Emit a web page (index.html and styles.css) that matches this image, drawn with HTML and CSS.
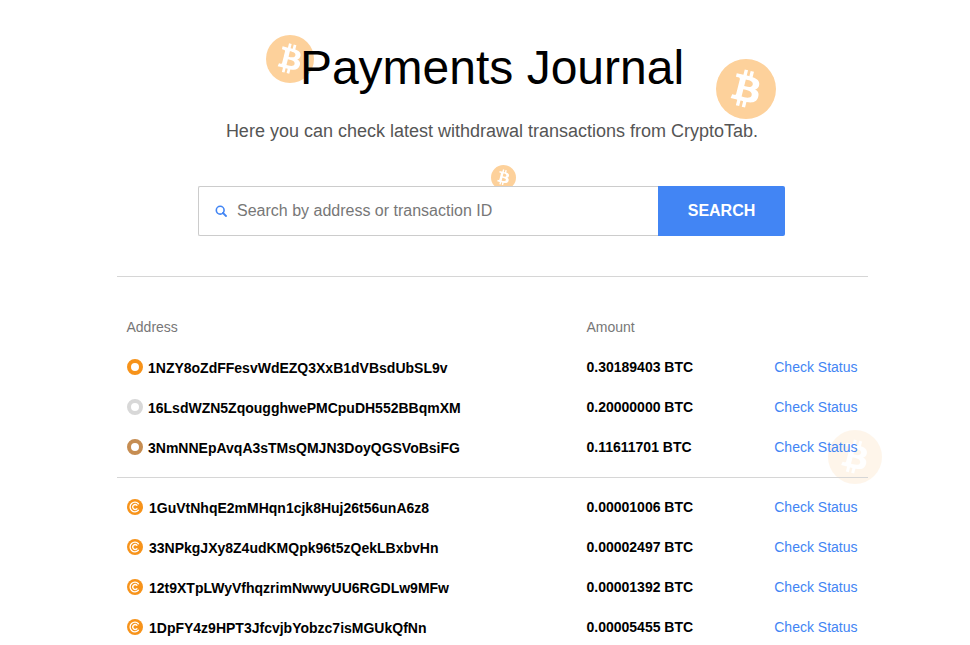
FILE: index.html
```html
<!DOCTYPE html>
<html lang="en">
<head>
<meta charset="utf-8">
<title>Payments Journal</title>
<link rel="stylesheet" href="styles.css">
</head>
<body>
<svg class="defs" width="0" height="0" aria-hidden="true">
  <defs>
    <g id="btc">
      <circle cx="32" cy="32" r="32" fill="#fdd19b"/>
      <path fill="#fff" d="M46.103 27.444c.637-4.258-2.605-6.547-7.038-8.074l1.438-5.768-3.511-.875-1.4 5.616c-.923-.23-1.871-.447-2.813-.662l1.41-5.653-3.509-.875-1.439 5.766c-.764-.174-1.514-.346-2.242-.527l.004-.018-4.842-1.209-.934 3.75s2.605.597 2.55.634c1.422.355 1.679 1.296 1.636 2.042l-1.638 6.571c.098.025.225.061.365.117l-.371-.092-2.296 9.205c-.174.432-.615 1.08-1.609.834.035.051-2.552-.637-2.552-.637l-1.743 4.019 4.569 1.139c.85.213 1.683.436 2.503.646l-1.453 5.834 3.507.875 1.439-5.772c.958.26 1.888.5 2.798.726l-1.434 5.745 3.511.875 1.453-5.823c5.987 1.133 10.489.676 12.384-4.739 1.527-4.36-.076-6.875-3.226-8.515 2.294-.529 4.022-2.038 4.483-5.155zM38.081 38.693c-1.085 4.36-8.426 2.003-10.806 1.412l1.928-7.729c2.38.594 10.012 1.77 8.878 6.317zm1.086-11.312c-.99 3.966-7.1 1.951-9.082 1.457l1.748-7.01c1.982.494 8.365 1.416 7.334 5.553z"/>
    </g>
    <g id="ctab">
      <circle cx="8" cy="8" r="8" fill="#f7931a"/>
      <path fill="none" stroke="#fff" stroke-width="1.3" stroke-linecap="round" d="M11.4 4.7A4.8 4.8 0 1 0 11.4 11.3"/>
      <path fill="none" stroke="#fff" stroke-width="1.3" stroke-linecap="round" d="M9.9 6.3A2.4 2.4 0 1 0 9.9 9.7"/>
    </g>
  </defs>
</svg>

<div class="coin coin-a"><svg viewBox="0 0 64 64"><use href="#btc"/></svg></div>
<div class="coin coin-b"><svg viewBox="0 0 64 64"><use href="#btc"/></svg></div>
<div class="coin coin-c"><svg viewBox="0 0 64 64"><use href="#btc"/></svg></div>
<div class="coin coin-d"><svg viewBox="0 0 64 64"><use href="#btc"/></svg></div>

<main class="page">
  <h1 class="title">Payments Journal</h1>
  <p class="subtitle">Here you can check latest withdrawal transactions from CryptoTab.</p>

  <form class="search">
    <label class="search-field">
      <svg class="search-icon" viewBox="0 0 12 12"><circle cx="5.2" cy="5.2" r="3.9" fill="none" stroke="#4285f4" stroke-width="1.6"/><path d="M8 8l3 3" stroke="#4285f4" stroke-width="1.8" stroke-linecap="round"/></svg>
      <input class="search-input" type="text" placeholder="Search by address or transaction ID">
    </label>
    <button class="search-btn" type="button">SEARCH</button>
  </form>

  <section class="journal">
    <div class="row head"><span class="col-addr">Address</span><span class="col-amt">Amount</span></div>

    <div class="group">
      <div class="row"><span class="col-addr"><span class="ring gold"></span><span class="addr">1NZY8oZdFFesvWdEZQ3XxB1dVBsdUbSL9v</span></span><span class="col-amt">0.30189403 BTC</span><a class="status">Check Status</a></div>
      <div class="row"><span class="col-addr"><span class="ring silver"></span><span class="addr">16LsdWZN5ZqougghwePMCpuDH552BBqmXM</span></span><span class="col-amt">0.20000000 BTC</span><a class="status">Check Status</a></div>
      <div class="row"><span class="col-addr"><span class="ring bronze"></span><span class="addr">3NmNNEpAvqA3sTMsQMJN3DoyQGSVoBsiFG</span></span><span class="col-amt">0.11611701 BTC</span><a class="status">Check Status</a></div>
    </div>

    <div class="group rest">
      <div class="row"><span class="col-addr"><svg class="ctab" viewBox="0 0 16 16"><use href="#ctab"/></svg><span class="addr">1GuVtNhqE2mMHqn1cjk8Huj26t56unA6z8</span></span><span class="col-amt">0.00001006 BTC</span><a class="status">Check Status</a></div>
      <div class="row"><span class="col-addr"><svg class="ctab" viewBox="0 0 16 16"><use href="#ctab"/></svg><span class="addr">33NPkgJXy8Z4udKMQpk96t5zQekLBxbvHn</span></span><span class="col-amt">0.00002497 BTC</span><a class="status">Check Status</a></div>
      <div class="row"><span class="col-addr"><svg class="ctab" viewBox="0 0 16 16"><use href="#ctab"/></svg><span class="addr">12t9XTpLWyVfhqzrimNwwyUU6RGDLw9MFw</span></span><span class="col-amt">0.00001392 BTC</span><a class="status">Check Status</a></div>
      <div class="row"><span class="col-addr"><svg class="ctab" viewBox="0 0 16 16"><use href="#ctab"/></svg><span class="addr">1DpFY4z9HPT3JfcvjbYobzc7isMGUkQfNn</span></span><span class="col-amt">0.00005455 BTC</span><a class="status">Check Status</a></div>
    </div>
  </section>
</main>
</body>
</html>
```
FILE: styles.css
```css
* { box-sizing: border-box; }
html, body { margin: 0; height: 645px; overflow: hidden; background: #fff; }
body { font-family: "Liberation Sans", Arial, sans-serif; color: #000; position: relative; }
.defs { position: absolute; }

.coin { position: absolute; z-index: 0; }
.coin svg { display: block; width: 100%; height: 100%; }
.coin-a { left: 266px; top: 35px; width: 48px; height: 48px; }
.coin-b { left: 716px; top: 59px; width: 60px; height: 60px; }
.coin-c { left: 491px; top: 165px; width: 25px; height: 25px; }
.coin-d { left: 828px; top: 430px; width: 54px; height: 54px; opacity: .2; }

.page { position: relative; z-index: 1; width: 751px; margin-left: 116.5px; }

.title { margin: 0; padding-top: 40px; font-size: 48px; line-height: 56px; font-weight: 400; text-align: center; }
.subtitle { margin: 24px 0 0; font-size: 18px; line-height: 22px; color: #555; text-align: center; }

.search { display: flex; width: 587px; height: 50px; margin: 44px 0 0 81.5px; }
.search-field { flex: 1; display: flex; align-items: center; gap: 10px; padding-left: 16px; background: #fff; border: 1px solid #ccc; border-right: 0; border-radius: 2px 0 0 2px; }
.search-icon { width: 12px; height: 12px; flex: none; }
.search-input { flex: 1; min-width: 0; border: 0; outline: 0; padding: 0; background: transparent; font: 16px "Liberation Sans", Arial, sans-serif; color: #333; }
.search-input::placeholder { color: #777; opacity: 1; }
.search-btn { width: 127px; border: 0; border-radius: 0 2px 2px 0; background: #4285f4; color: #fff; font: 700 16px "Liberation Sans", Arial, sans-serif; }

.journal { margin-top: 40px; padding-top: 30px; border-top: 1px solid #d6d6d6; }
.row { display: flex; align-items: center; height: 40px; padding: 0 10px; font-size: 14px; }
.col-addr { display: flex; align-items: center; width: 460px; font-size: 14px; font-weight: 700; }
.col-amt { font-size: 14px; font-weight: 700; }
.head .col-addr, .head .col-amt { font-weight: 400; color: #777; }
.addr { padding-top: 2px; }
.status { margin-left: auto; color: #4285f4; }

.ring { flex: none; width: 16px; height: 16px; margin: 0 5px 0 .5px; border: 4px solid; border-radius: 50%; }
.gold { border-color: #f7931a; }
.silver { border-color: #d8d8d8; }
.bronze { border-color: #c68d52; }
.ctab { flex: none; width: 16px; height: 16px; margin: 0 6px 0 .5px; }

.group { padding-bottom: 10px; }
.rest { padding-top: 9px; border-top: 1px solid #d6d6d6; }
```
